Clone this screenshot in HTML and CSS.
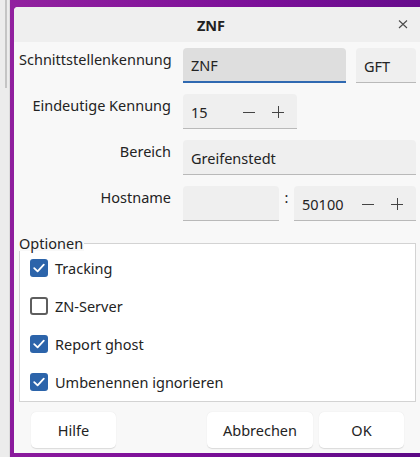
FILE: index.html
```html
<!DOCTYPE html>
<html lang="de">
<head>
<meta charset="utf-8">
<title>ZNF</title>
<link rel="stylesheet" href="styles.css">
</head>
<body>
<div class="desk">
  <div class="side"><div class="thumb"></div></div>
  <div class="frame">
    <div class="dialog">
      <div class="titlebar">
        <span></span>
        <span class="title">ZNF</span>
        <span class="close" aria-label="Schließen">
          <svg width="10" height="10" viewBox="0 0 10 10"><path d="M1 1.5L9 9M9 1.5L1 9" stroke="#4a4a4a" stroke-width="1.1" fill="none"/></svg>
        </span>
      </div>
      <div class="body">
        <div class="form">
          <div class="lbl">Schnittstellenkennung</div>
          <div class="fields">
            <div class="field focus grow">ZNF</div>
            <div class="field gft">GFT</div>
          </div>

          <div class="lbl">Eindeutige Kennung</div>
          <div class="fields">
            <div class="field spin id">
              <span class="val">15</span>
              <svg class="ico" width="12" height="12" viewBox="0 0 12 12"><path d="M0 6.5H12" stroke="#444" stroke-width="1"/></svg>
              <svg class="ico" width="12" height="12" viewBox="0 0 12 12"><path d="M0 6.5H12M6.5 0V12" stroke="#444" stroke-width="1"/></svg>
            </div>
          </div>

          <div class="lbl">Bereich</div>
          <div class="fields">
            <div class="field grow">Greifenstedt</div>
          </div>

          <div class="lbl">Hostname</div>
          <div class="fields host">
            <div class="field hostname"></div>
            <span class="colon">:</span>
            <div class="field spin port">
              <span class="val">50100</span>
              <svg class="ico" width="12" height="12" viewBox="0 0 12 12"><path d="M0 6.5H12" stroke="#444" stroke-width="1"/></svg>
              <svg class="ico" width="12" height="12" viewBox="0 0 12 12"><path d="M0 6.5H12M6.5 0V12" stroke="#444" stroke-width="1"/></svg>
            </div>
          </div>
        </div>

        <fieldset class="group">
          <legend>Optionen</legend>
          <div class="opts">
            <div class="opt"><span class="cb on"><svg width="18" height="18" viewBox="0 0 18 18"><path d="M4.2 9.2L7.6 12.4L13.8 5.6" stroke="#fff" stroke-width="1.8" fill="none" stroke-linecap="round" stroke-linejoin="round"/></svg></span>Tracking</div>
            <div class="opt"><span class="cb"></span>ZN-Server</div>
            <div class="opt"><span class="cb on"><svg width="18" height="18" viewBox="0 0 18 18"><path d="M4.2 9.2L7.6 12.4L13.8 5.6" stroke="#fff" stroke-width="1.8" fill="none" stroke-linecap="round" stroke-linejoin="round"/></svg></span>Report ghost</div>
            <div class="opt"><span class="cb on"><svg width="18" height="18" viewBox="0 0 18 18"><path d="M4.2 9.2L7.6 12.4L13.8 5.6" stroke="#fff" stroke-width="1.8" fill="none" stroke-linecap="round" stroke-linejoin="round"/></svg></span>Umbenennen ignorieren</div>
          </div>
        </fieldset>

        <div class="buttons">
          <button class="btn help">Hilfe</button>
          <span class="spacer"></span>
          <button class="btn cancel">Abbrechen</button>
          <button class="btn ok">OK</button>
        </div>
      </div>
    </div>
  </div>
</div>
</body>
</html>
```

FILE: styles.css
```css
* { box-sizing: border-box; }
html, body { margin: 0; padding: 0; }
body {
  width: 420px;
  height: 457px;
  overflow: hidden;
  font-family: "Noto Sans", "DejaVu Sans", sans-serif;
  font-size: 14.5px;
  color: #232323;
}
.desk {
  display: flex;
  width: 420px;
  height: 457px;
}
.side {
  width: 10px;
  flex: none;
  background: #ececec;
  border-right: 1px solid #dcdcdc;
}
.thumb {
  margin-left: 5px;
  width: 2px;
  height: 88px;
  background: #c4c4c4;
}
.frame {
  flex: 1;
  display: flex;
  padding: 7px 0 4px 4px;
  background: linear-gradient(100deg, #92219f 0%, #7c0f99 50%, #5c0a86 100%);
}
.dialog {
  flex: 1;
  display: flex;
  flex-direction: column;
  background: #f8f8f8;
  border-top-left-radius: 4px;
  overflow: hidden;
}
.titlebar {
  height: 35px;
  flex: none;
  background: #efefef;
  display: grid;
  grid-template-columns: 1fr auto 1fr;
  align-items: center;
  padding-right: 12px;
}
.title {
  font-weight: 700;
  font-size: 14.5px;
  color: #222;
}
.close {
  justify-self: end;
  display: flex;
  margin-top: -2px;
}
.body {
  flex: 1;
  display: flex;
  flex-direction: column;
  padding: 6px 4px 5px 5px;
}
.form {
  display: grid;
  grid-template-columns: 152px 1fr;
  column-gap: 12px;
  row-gap: 11px;
}
.lbl {
  text-align: right;
  line-height: 22px;
  white-space: nowrap;
}
.fields {
  display: flex;
  gap: 10px;
}
.fields.host { gap: 0; }
.field {
  height: 35px;
  background: #efefef;
  border-bottom: 1px solid #b9b9b9;
  border-radius: 4px 4px 0 0;
  padding: 1px 8px 0;
  display: flex;
  align-items: center;
  white-space: nowrap;
}
.grow { flex: 1; }
.field.focus {
  background: #dedede;
  border-bottom: 2px solid #2f69b1;
}
.field.gft { width: 60px; }
.spin .val { flex: 1; }
.spin .ico { margin-left: 17px; flex: none; }
.spin { padding-right: 13px; }
.spin .ico:nth-of-type(1) { margin-left: 0; }
.field.id { width: 114px; }
.field.hostname { width: 96px; }
.colon {
  width: 15px;
  text-align: center;
  line-height: 22px;
}
.field.port { flex: 1; }

.group {
  margin: 14px 0 0;
  padding: 0;
  border: 1px solid #d3d3d3;
  background: #ffffff;
  min-width: 0;
}
.group legend {
  padding: 0 1px 0 0;
  margin-left: -1px;
  line-height: 16px;
  background: #f8f8f8;
}
.opts {
  margin-top: -2px;
  padding: 0 10px;
  display: flex;
  flex-direction: column;
}
.opt {
  height: 38px;
  display: flex;
  align-items: center;
  gap: 7px;
  white-space: nowrap;
}
.cb {
  width: 18px;
  height: 18px;
  flex: none;
  border-radius: 3px;
  border: 2px solid #5e5e5e;
  background: #fff;
  display: flex;
}
.cb.on {
  border: none;
  background: #2c64aa;
}
.buttons {
  display: flex;
  gap: 6px;
  padding: 0 12px;
  margin-top: 10px;
}
.spacer { flex: 1; }
.btn {
  font: inherit;
  color: #232323;
  height: 36px;
  border: none;
  border-radius: 5px;
  background: #ffffff;
  box-shadow: 0 0.5px 1px rgba(0,0,0,0.12);
  padding: 0;
}
.btn.help { width: 85px; }
.btn.cancel { width: 106px; }
.btn.ok { width: 85px; }
```
